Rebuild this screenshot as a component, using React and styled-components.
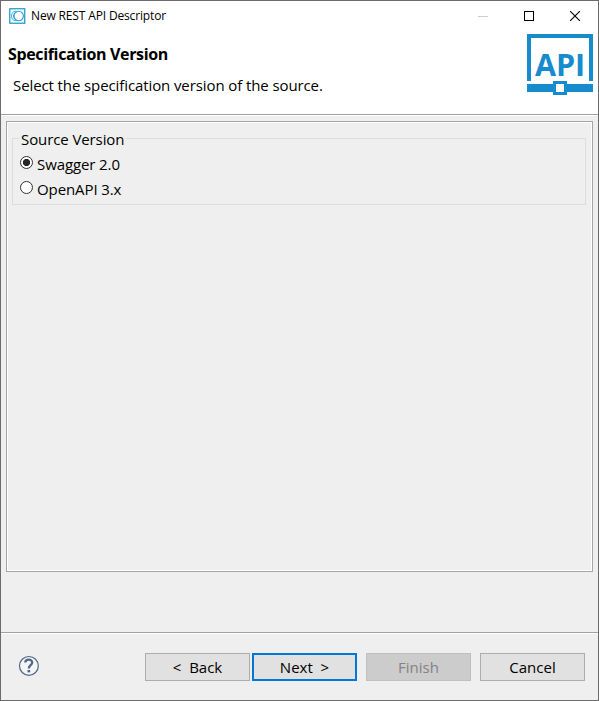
import React, { useState } from "react";
import styled, { createGlobalStyle } from "styled-components";

const GlobalStyle = createGlobalStyle`
  * { box-sizing: border-box; }
  body { margin: 0; }
`;

const Dialog = styled.div`
  width: 599px;
  height: 701px;
  display: flex;
  flex-direction: column;
  border: 1px solid #6b6b6b;
  background: #efefef;
  color: #000;
  font-family: "Open Sans", "Noto Sans", sans-serif;
  font-size: 15px;
  line-height: 20px;
  overflow: hidden;
`;

const Header = styled.header`
  height: 115px;
  flex: none;
  background: #fff;
  border-bottom: 1px solid #fff;
  box-shadow: inset 0 -1px #a0a0a0;
`;

const TitleBar = styled.div`
  height: 29px;
  padding-left: 8px;
  display: flex;
  align-items: center;
`;

const Label = styled.span`
  white-space: pre;
  letter-spacing: ${(p) => p.$spacing || 0}px;
`;

const WindowTitle = styled(Label)`
  flex: 1;
  margin-left: 5px;
  font-size: 12px;
`;

const WindowControls = styled.div`
  display: flex;
  height: 29px;
`;

const WindowButton = styled.button`
  width: 46px;
  padding: 0;
  border: 0;
  background: none;
  display: flex;
  justify-content: center;
  align-items: center;
`;

const Banner = styled.div`
  display: flex;
  justify-content: space-between;
  padding: 4px 5px 0 7px;
`;

const Heading = styled.h1`
  margin: 9px 0 0;
  font-size: 16px;
  line-height: 22px;
  font-weight: 700;
  white-space: nowrap;
  letter-spacing: ${(p) => p.$spacing}px;
`;

const Description = styled.p`
  margin: 10px 0 0 5px;
  white-space: nowrap;
  letter-spacing: ${(p) => p.$spacing}px;
`;

const Content = styled.main`
  height: 451px;
  flex: none;
  margin: 5px 5px 0;
  padding: 16px 6px 0 5px;
  border: 1px solid #a3a5a9;
  box-shadow: inset 0 0 0 1px #fff;
`;

const Group = styled.fieldset`
  height: 67px;
  margin: 0;
  min-width: 0;
  padding: 0 0 0 7px;
  border: 1px solid #dcdcdc;
  display: flex;
  flex-direction: column;
`;

const Legend = styled.div`
  align-self: flex-start;
  height: 20px;
  margin: -10px 0 2px -1px;
  padding: 0 2px;
  background: #efefef;
`;

const Option = styled.label`
  height: 25px;
  display: flex;
  align-items: center;
  gap: 4px;
`;

const Radio = styled.input`
  appearance: none;
  width: 13px;
  height: 13px;
  margin: -2px 0 0;
  border: 1px solid #333;
  border-radius: 50%;
  background: #fff;
  &:checked {
    background: radial-gradient(circle, #262626 3.2px, #fff 4px);
  }
`;

const Footer = styled.footer`
  height: 68px;
  margin-top: auto;
  flex: none;
  border-top: 1px solid #a0a0a0;
  box-shadow: inset 0 1px #fff;
  display: flex;
  align-items: flex-start;
  padding: 20px 13px 0 17px;
`;

const HelpButton = styled.button`
  width: 21px;
  height: 22px;
  margin: 2px auto 0 0;
  padding: 0;
  border: 0;
  background: none;
`;

const Button = styled.button`
  width: 105px;
  height: 28px;
  margin-left: ${(p) => p.$gap || 0}px;
  padding: 0;
  border: ${(p) => (p.$primary ? "2px solid #0078d7" : "1px solid #adadad")};
  background: #e1e1e1;
  color: #000;
  font: inherit;
  line-height: 20px;
  &:disabled {
    border-color: #bfbfbf;
    background: #ccc;
    color: #838383;
  }
`;

const AppIcon = () => (
  <svg width="17" height="16" viewBox="0 0 17 16" fill="none" stroke="#249dcc">
    <rect x="0.75" y="0.75" width="15" height="14.5" strokeWidth="1.3" />
    <circle cx="9.7" cy="8" r="4.7" strokeWidth="1.1" />
    <path d="M7 3.2C4 3.2 2.5 5.3 2.5 8s1.6 4.8 4.5 4.8M7.8 3.7C5 4.9 4.5 6.5 4.5 8s.7 3.5 3.3 4.5" strokeWidth="0.8" />
  </svg>
);

const ApiLogo = () => (
  <svg width="66" height="62" viewBox="0 0 66 62">
    <path d="M0 0h66v47h-4V4H4v43H0zM0 50h66v8H0z" fill="#168bcd" />
    <rect x="27.5" y="48.5" width="11" height="11" fill="#fff" stroke="#168bcd" strokeWidth="3" />
    <text x="8 29 48" y="42" fill="#168bcd" fontFamily="Open Sans, sans-serif" fontWeight="700" fontSize="30.5">
      API
    </text>
  </svg>
);

const HelpIcon = () => (
  <svg width="21" height="22" viewBox="0 0 21 22" fill="none" stroke="#51658a">
    <circle cx="10.9" cy="10.9" r="9.4" fill="#f5f5f5" strokeWidth="1.2" />
    <path d="M7.2 7.5C7.5 3.8 14.2 3.8 14.2 7.4c0 2.8-3.4 2.8-3.4 6" strokeWidth="2.3" />
    <path d="M9.5 16.2h2.7" strokeWidth="2.3" />
  </svg>
);

export default function App() {
  const [version, setVersion] = useState("swagger");
  return (
    <>
      <GlobalStyle />
      <Dialog>
        <Header>
          <TitleBar>
            <AppIcon />
            <WindowTitle $spacing={-0.15}>New REST API Descriptor</WindowTitle>
            <WindowControls>
              <WindowButton disabled aria-label="Minimize">
                <svg width="10" height="10"><path d="M0 5.5h10" stroke="#ccc" /></svg>
              </WindowButton>
              <WindowButton aria-label="Maximize">
                <svg width="10" height="10"><rect x=".5" y=".5" width="9" height="9" fill="none" stroke="#000" /></svg>
              </WindowButton>
              <WindowButton aria-label="Close">
                <svg width="10" height="10"><path d="M0 0l10 10M10 0L0 10" stroke="#000" strokeWidth="1.1" /></svg>
              </WindowButton>
            </WindowControls>
          </TitleBar>
          <Banner>
            <div>
              <Heading $spacing={-0.35}>Specification Version</Heading>
              <Description $spacing={-0.1}>Select the specification version of the source.</Description>
            </div>
            <ApiLogo />
          </Banner>
        </Header>
        <Content>
          <Group>
            <Legend><Label $spacing={-0.1}>Source Version</Label></Legend>
            <Option>
              <Radio type="radio" name="version" checked={version === "swagger"} onChange={() => setVersion("swagger")} />
              <Label $spacing={-0.1}>Swagger 2.0</Label>
            </Option>
            <Option>
              <Radio type="radio" name="version" checked={version === "openapi"} onChange={() => setVersion("openapi")} />
              <Label $spacing={-0.1}>OpenAPI 3.x</Label>
            </Option>
          </Group>
        </Content>
        <Footer>
          <HelpButton aria-label="Help"><HelpIcon /></HelpButton>
          <Button><Label>{"<  Back"}</Label></Button>
          <Button $primary $gap={2}><Label>{"Next  >"}</Label></Button>
          <Button disabled $gap={9}><Label>Finish</Label></Button>
          <Button $gap={9}><Label>Cancel</Label></Button>
        </Footer>
      </Dialog>
    </>
  );
}
